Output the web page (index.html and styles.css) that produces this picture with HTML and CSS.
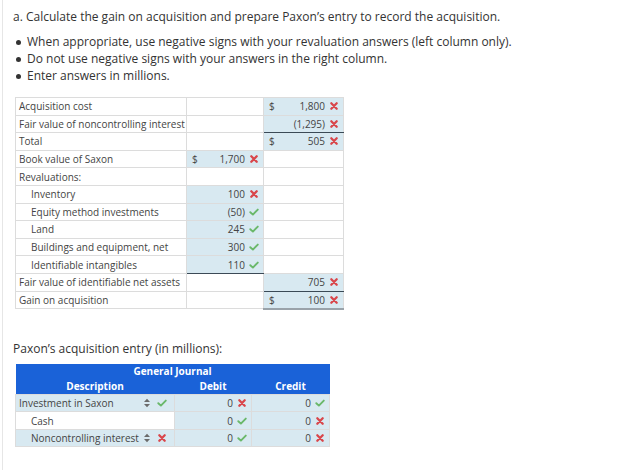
FILE: index.html
```html
<!DOCTYPE html>
<html>
<head>
<meta charset="utf-8">
<link rel="stylesheet" href="styles.css">
</head>
<body>
<svg width="0" height="0" class="defs">
  <symbol id="ix" viewBox="0 0 10 10"><path d="M2.3 2.3 L7.7 7.7 M7.7 2.3 L2.3 7.7" stroke="#d9464b" stroke-width="2.3" stroke-linecap="round" fill="none"/></symbol>
  <symbol id="ick" viewBox="0 0 10 10"><path d="M1.3 5.2 L3.9 7.6 L8.8 2.6" stroke="#6ab86a" stroke-width="1.9" stroke-linecap="round" stroke-linejoin="round" fill="none"/></symbol>
  <symbol id="iud" viewBox="0 0 8 10"><path d="M4 0.8 L7 4 L1 4 Z M1 6 L7 6 L4 9.2 Z" fill="#6b6b6b"/></symbol>
</svg>
<div class="page">
  <p class="title">a. Calculate the gain on acquisition and prepare Paxon’s entry to record the acquisition.</p>
  <ul class="bullets">
    <li>When appropriate, use negative signs with your revaluation answers (left column only).</li>
    <li>Do not use negative signs with your answers in the right column.</li>
    <li>Enter answers in millions.</li>
  </ul>

  <table class="calc">
    <colgroup><col class="c1"><col class="c2"><col class="c3"></colgroup>
    <tr><td class="lbl">Acquisition cost</td><td></td><td class="in"><span class="dl">$</span><span class="v">1,800</span><svg class="mk"><use href="#ix"/></svg></td></tr>
    <tr><td class="lbl">Fair value of noncontrolling interest</td><td></td><td class="in ul"><span class="v">(1,295)</span><svg class="mk"><use href="#ix"/></svg></td></tr>
    <tr><td class="lbl">Total</td><td></td><td class="in"><span class="dl">$</span><span class="v">505</span><svg class="mk"><use href="#ix"/></svg></td></tr>
    <tr><td class="lbl">Book value of Saxon</td><td class="in"><span class="dl">$</span><span class="v">1,700</span><svg class="mk"><use href="#ix"/></svg></td><td></td></tr>
    <tr><td class="lbl">Revaluations:</td><td></td><td></td></tr>
    <tr><td class="lbl ind">Inventory</td><td class="in"><span class="v">100</span><svg class="mk"><use href="#ix"/></svg></td><td></td></tr>
    <tr><td class="lbl ind">Equity method investments</td><td class="in"><span class="v">(50)</span><svg class="mk"><use href="#ick"/></svg></td><td></td></tr>
    <tr><td class="lbl ind">Land</td><td class="in"><span class="v">245</span><svg class="mk"><use href="#ick"/></svg></td><td></td></tr>
    <tr><td class="lbl ind">Buildings and equipment, net</td><td class="in"><span class="v">300</span><svg class="mk"><use href="#ick"/></svg></td><td></td></tr>
    <tr><td class="lbl ind">Identifiable intangibles</td><td class="in ul"><span class="v">110</span><svg class="mk"><use href="#ick"/></svg></td><td></td></tr>
    <tr><td class="lbl">Fair value of identifiable net assets</td><td></td><td class="in ul"><span class="v">705</span><svg class="mk"><use href="#ix"/></svg></td></tr>
    <tr><td class="lbl">Gain on acquisition</td><td></td><td class="in dbl"><span class="dl">$</span><span class="v">100</span><svg class="mk"><use href="#ix"/></svg></td></tr>
  </table>

  <p class="sub">Paxon’s acquisition entry (in millions):</p>

  <table class="journal">
    <colgroup><col class="j1"><col class="j2"><col class="j3"></colgroup>
    <tr class="h1"><th colspan="3">General Journal</th></tr>
    <tr class="h2"><th>Description</th><th>Debit</th><th>Credit</th></tr>
    <tr>
      <td class="desc sel"><div class="dwrap"><span class="dtxt">Investment in Saxon</span><svg class="arr"><use href="#iud"/></svg><svg class="mk"><use href="#ick"/></svg></div></td>
      <td class="in"><span class="v">0</span><svg class="mk"><use href="#ix"/></svg></td>
      <td class="in"><span class="v">0</span><svg class="mk"><use href="#ick"/></svg></td>
    </tr>
    <tr>
      <td class="desc plain"><div class="dwrap"><span class="dtxt ind">Cash</span></div></td>
      <td class="in"><span class="v">0</span><svg class="mk"><use href="#ick"/></svg></td>
      <td class="in"><span class="v">0</span><svg class="mk"><use href="#ix"/></svg></td>
    </tr>
    <tr>
      <td class="desc sel"><div class="dwrap"><span class="dtxt ind">Noncontrolling interest</span><svg class="arr"><use href="#iud"/></svg><svg class="mk"><use href="#ix"/></svg></div></td>
      <td class="in"><span class="v">0</span><svg class="mk"><use href="#ick"/></svg></td>
      <td class="in"><span class="v">0</span><svg class="mk"><use href="#ix"/></svg></td>
    </tr>
  </table>
</div>
</body>
</html>
```
FILE: styles.css
```css
html, body {
  margin: 0;
  padding: 0;
  background: #fff;
}
body {
  font-family: "Open Sans", "DejaVu Sans", sans-serif;
  color: #333;
}
.defs {
  position: absolute;
  width: 0;
  height: 0;
}
.page {
  margin-left: 2px;
  border-left: 1px solid #e6e6e6;
  min-height: 470px;
  padding: 8px 0 0 10px;
  box-sizing: border-box;
}
.title {
  margin: 0;
  font-size: 12px;
  line-height: 17px;
}
.bullets {
  list-style: none;
  margin: 8px 0 0 0;
  padding: 0 0 0 14px;
  font-size: 12px;
  line-height: 17px;
}
.bullets li {
  position: relative;
}
.bullets li::before {
  content: "";
  position: absolute;
  left: -11px;
  top: 6.5px;
  width: 5px;
  height: 5px;
  border-radius: 50%;
  background: #333;
}
table {
  border-collapse: collapse;
  table-layout: fixed;
}
.calc {
  margin: 13px 0 0 2px;
  width: 328px;
  font-size: 10px;
}
.calc .c1 { width: 171px; }
.calc .c2 { width: 77px; }
.calc .c3 { width: 80px; }
.calc td {
  height: 17.6px;
  padding: 0 4px;
  border: 1px solid #dcdcdc;
  box-sizing: border-box;
  white-space: nowrap;
  color: #444;
}
.calc td.lbl { padding-left: 3px; }
.calc td.ind { padding-left: 15px; }
td.in {
  background: #d8e9f1;
  text-align: right;
  padding-right: 4px;
}
td.in .dl {
  float: left;
  margin-left: 1px;
}
td.ul { border-bottom: 1.5px solid #3b4a56; }
td.dbl { border-bottom: 2.5px solid #9aa3aa; }
.mk {
  display: inline-block;
  width: 10px;
  height: 10px;
  margin-left: 4px;
  vertical-align: -1px;
}
.sub {
  margin: 30px 0 0 0;
  font-size: 12px;
  line-height: 17px;
}
.journal {
  margin: 7px 0 0 2px;
  width: 314px;
  font-size: 10px;
}
.journal .j1 { width: 159px; }
.journal .j2 { width: 77px; }
.journal .j3 { width: 78px; }
.journal th {
  background: #1a62d8;
  color: #fff;
  font-weight: bold;
  padding: 0;
  height: 15px;
  line-height: 15px;
}
.journal td {
  height: 17.6px;
  padding: 0 4px;
  border: 1px solid #dcdcdc;
  box-sizing: border-box;
  white-space: nowrap;
  color: #444;
}
.journal td.desc {
  padding-left: 3px;
  padding-right: 0;
}
.journal td.sel { background: #d8e9f1; }
.journal td.plain { background: #fff; }
.dwrap {
  display: flex;
  align-items: center;
}
.dtxt {
  flex: none;
  width: 124px;
  overflow: hidden;
}
.dtxt.ind { padding-left: 12px; width: 112px; }
.arr {
  flex: none;
  width: 8px;
  height: 10px;
}
.dwrap .mk { flex: none; margin-left: 6px; vertical-align: 0; }
```
